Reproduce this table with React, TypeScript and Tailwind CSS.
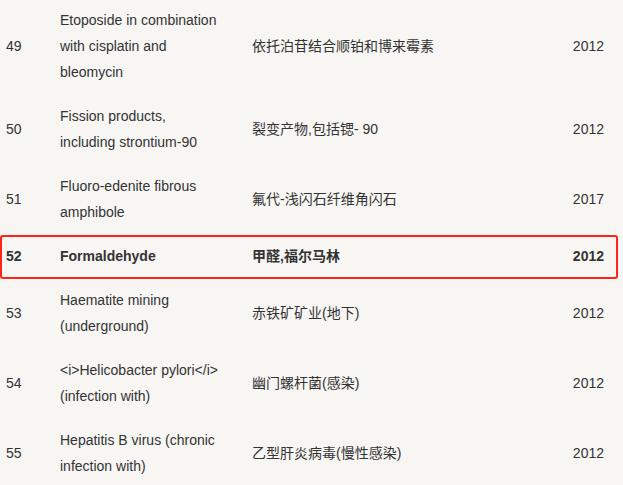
import React from "react";

type Row = {
  no: string;
  en: string;
  zh: string;
  year: string;
  highlight?: boolean;
};

const rows: Row[] = [
  { no: "49", en: "Etoposide in combination with cisplatin and bleomycin", zh: "依托泊苷结合顺铂和博来霉素", year: "2012" },
  { no: "50", en: "Fission products, including strontium-90", zh: "裂变产物,包括锶- 90", year: "2012" },
  { no: "51", en: "Fluoro-edenite fibrous amphibole", zh: "氟代-浅闪石纤维角闪石", year: "2017" },
  { no: "52", en: "Formaldehyde", zh: "甲醛,福尔马林", year: "2012", highlight: true },
  { no: "53", en: "Haematite mining (underground)", zh: "赤铁矿矿业(地下)", year: "2012" },
  { no: "54", en: "<i>Helicobacter pylori</i> (infection with)", zh: "幽门螺杆菌(感染)", year: "2012" },
  { no: "55", en: "Hepatitis B virus (chronic infection with)", zh: "乙型肝炎病毒(慢性感染)", year: "2012" },
];

export default function App() {
  return (
    <div
      className="w-[623px] h-[485px] overflow-hidden bg-[#f7f6f3] text-[#333333] text-[14px] leading-[26px]"
      style={{ fontFamily: '"Liberation Sans", Arial, "Noto Sans CJK SC", sans-serif' }}
    >
      <div className="-mt-[2px] flex flex-col">
        {rows.map((r) => (
          <div
            key={r.no}
            className={`relative grid grid-cols-[60px_192px_1fr_auto] items-center py-[9px] ${
              r.highlight ? "font-bold" : ""
            }`}
          >
            <div className="pl-[6px]">{r.no}</div>
            <div className="w-[160px]">{r.en}</div>
            <div>{r.zh}</div>
            <div className="pr-[19px]">{r.year}</div>
            {r.highlight && (
              <span className="pointer-events-none absolute left-0 top-[1px] h-[44px] w-[618px] rounded-[3px] border-2 border-[#ff2418]" />
            )}
          </div>
        ))}
      </div>
    </div>
  );
}
